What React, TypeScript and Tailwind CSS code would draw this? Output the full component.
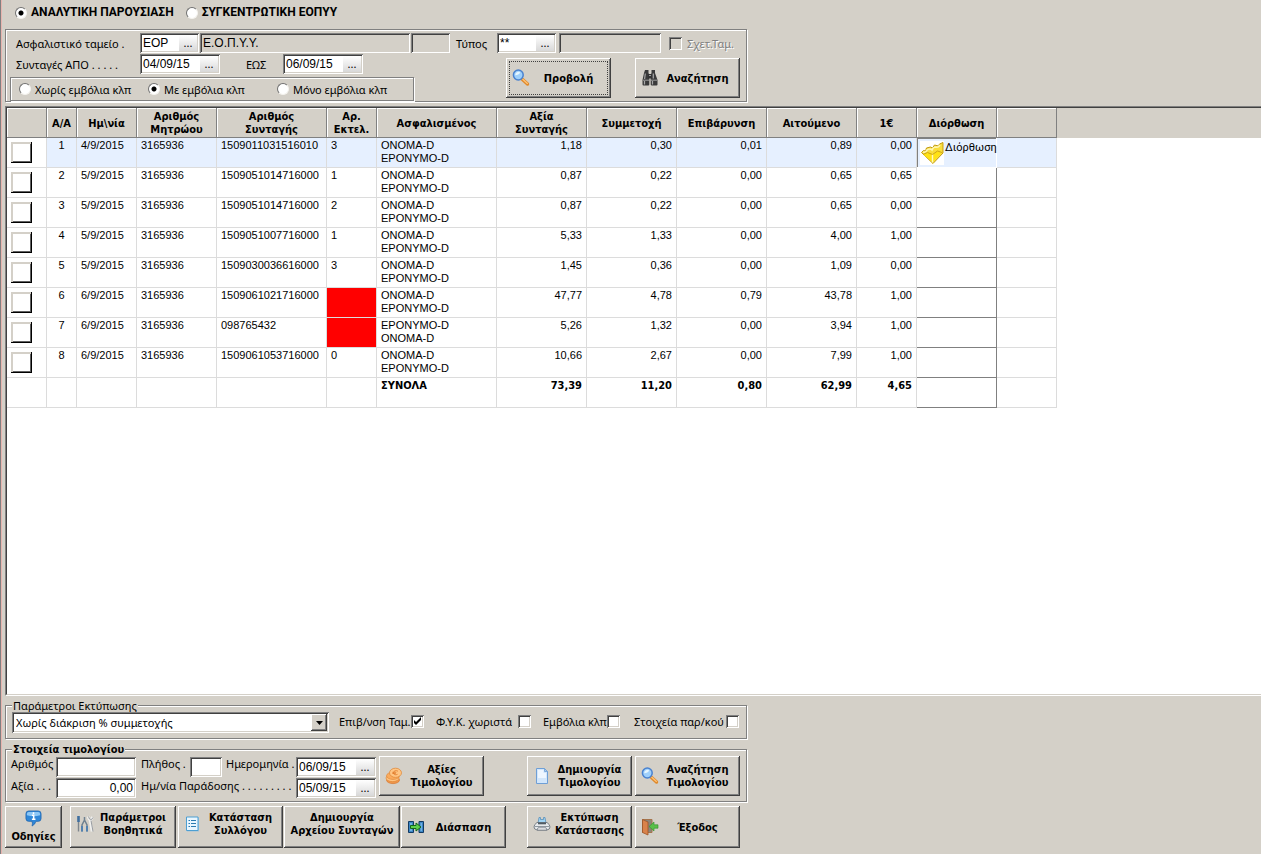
import { useState, ReactNode } from 'react';
import clsx from 'clsx';

// --- Τύποι ---

interface Prescription {
    date: string;
    registry: string;
    code: string;
    execution: string;
    missing?: boolean;
    insured: [string, string];
    amounts: string[];
}

// --- Δεδομένα ---

const ROWS: Prescription[] = [
    { date: '4/9/2015', registry: '3165936', code: '1509011031516010', execution: '3', insured: ['ONOMA-D', 'EPONYMO-D'], amounts: ['1,18', '0,30', '0,01', '0,89', '0,00'] },
    { date: '5/9/2015', registry: '3165936', code: '1509051014716000', execution: '1', insured: ['ONOMA-D', 'EPONYMO-D'], amounts: ['0,87', '0,22', '0,00', '0,65', '0,65'] },
    { date: '5/9/2015', registry: '3165936', code: '1509051014716000', execution: '2', insured: ['ONOMA-D', 'EPONYMO-D'], amounts: ['0,87', '0,22', '0,00', '0,65', '0,00'] },
    { date: '5/9/2015', registry: '3165936', code: '1509051007716000', execution: '1', insured: ['ONOMA-D', 'EPONYMO-D'], amounts: ['5,33', '1,33', '0,00', '4,00', '1,00'] },
    { date: '5/9/2015', registry: '3165936', code: '1509030036616000', execution: '3', insured: ['ONOMA-D', 'EPONYMO-D'], amounts: ['1,45', '0,36', '0,00', '1,09', '0,00'] },
    { date: '6/9/2015', registry: '3165936', code: '1509061021716000', execution: '', missing: true, insured: ['ONOMA-D', 'EPONYMO-D'], amounts: ['47,77', '4,78', '0,79', '43,78', '1,00'] },
    { date: '6/9/2015', registry: '3165936', code: '098765432', execution: '', missing: true, insured: ['EPONYMO-D', 'ONOMA-D'], amounts: ['5,26', '1,32', '0,00', '3,94', '1,00'] },
    { date: '6/9/2015', registry: '3165936', code: '1509061053716000', execution: '0', insured: ['ONOMA-D', 'EPONYMO-D'], amounts: ['10,66', '2,67', '0,00', '7,99', '1,00'] },
];

const TOTALS = ['73,39', '11,20', '0,80', '62,99', '4,65'];

const HEADERS = ['', 'A/A', 'Ημ\\νία', 'Αριθμός\nΜητρώου', 'Αριθμός\nΣυνταγής', 'Αρ.\nΕκτελ.', 'Ασφαλισμένος', 'Αξία\nΣυνταγής', 'Συμμετοχή', 'Επιβάρυνση', 'Αιτούμενο', '1€', 'Διόρθωση', ''];

// --- Κοινά στυλ ---

const BOLD = "font-['DejaVu_Sans_Condensed','DejaVu_Sans',sans-serif] font-bold";
const DATA = "font-['Liberation_Sans',Arial,sans-serif]";
const SUNKEN = 'shadow-[inset_1px_1px_#808080,inset_-1px_-1px_#fff,inset_2px_2px_#404040,inset_-2px_-2px_#d4d0c8]';
const RAISED = 'shadow-[inset_-1px_-1px_#404040,inset_1px_1px_#fff,inset_-2px_-2px_#808080]';
const ETCHED = 'border border-[#808080] shadow-[1px_1px_#fff,inset_1px_1px_#fff]';
const CELL = 'border-r border-b border-[#dcdcdc] px-1 pt-px align-top';

// --- Στοιχεία φόρμας ---

function Combo({ id, value, className }: { id: string; value: string; className: string }) {
    return (
        <span className={clsx('flex h-5 shrink-0 bg-white p-[2px]', SUNKEN, className)}>
            <input id={id} defaultValue={value} className={clsx('min-w-0 flex-1 px-px text-xs leading-4 outline-none', DATA)} />
            <button type="button" className="w-[18px] bg-linear-to-b from-white to-[#d8d8d8] text-[11px] leading-3">...</button>
        </span>
    );
}

function TextBox({ id, value = '', className, readOnly, label }: { id: string; value?: string; className: string; readOnly?: boolean; label?: string }) {
    return (
        <input
            id={id}
            aria-label={label}
            defaultValue={value}
            readOnly={readOnly}
            className={clsx('h-5 shrink-0 px-[3px] text-xs outline-none', DATA, SUNKEN, readOnly ? 'bg-[#d4d0c8]' : 'bg-white', className)}
        />
    );
}

function Radio({ name, label, checked, className }: { name: string; label: string; checked?: boolean; className?: string }) {
    return (
        <label className={clsx('flex items-center whitespace-nowrap', className)}>
            <input
                type="radio"
                name={name}
                defaultChecked={checked}
                className="mr-1 size-3 shrink-0 appearance-none rounded-full border border-[#f4f2ee] border-t-[#707070] border-l-[#707070] bg-white checked:bg-[radial-gradient(circle,#000_2px,#fff_3px)]"
            />
            {label}
        </label>
    );
}

function Check({ id, checked, disabled }: { id: string; checked?: boolean; disabled?: boolean }) {
    return (
        <span className="grid size-[13px] shrink-0">
            <input
                id={id}
                type="checkbox"
                defaultChecked={checked}
                disabled={disabled}
                className={clsx('peer col-start-1 row-start-1 size-[13px] appearance-none bg-white disabled:bg-[#d4d0c8]', SUNKEN)}
            />
            <svg viewBox="0 0 13 13" className="pointer-events-none invisible col-start-1 row-start-1 size-[13px] peer-checked:visible">
                <path d="M3 5v3l2 2 5-5V2L5 7z" fill="#000" />
            </svg>
        </span>
    );
}

function ToolButton({ icon, children, className, focused }: { icon?: ReactNode; children: ReactNode; className: string; focused?: boolean }) {
    return (
        <button
            type="button"
            className={clsx('flex shrink-0 items-center text-center leading-[13px] whitespace-pre', icon ? 'pr-1 pl-[6px]' : 'px-1', BOLD, RAISED, focused && 'outline-1 -outline-offset-4 outline-dotted outline-[#404040]', className)}
        >
            {icon}
            <span className="flex-1">{children}</span>
        </button>
    );
}

// --- Εικονίδια ---

const Magnifier = () => (
    <svg viewBox="0 0 18 18" className="size-[18px] shrink-0">
        <path d="M10 10l5.5 5" stroke="#e08a2c" strokeWidth="3.4" strokeLinecap="round" />
        <path d="M10.8 10.2l4.6 4.2" stroke="#ffc477" strokeWidth="1.3" strokeLinecap="round" />
        <circle cx="6.3" cy="6" r="4.9" fill="#9fd0fb" stroke="#4a82cf" strokeWidth="1.5" />
        <path d="M3.2 6.2a3.2 3.2 0 0 1 5-2.8c-1 1.8-2.5 2.6-5 2.8z" fill="#e6f6ff" />
    </svg>
);

const Binoculars = () => (
    <svg viewBox="0 0 18 18" className="size-[18px] shrink-0">
        <path d="M4 1h3.5v3l.8 2v9.5q0 1-1 1H2.500q-1 0-1-1V11L3 4z" fill="#3a3a3a" />
        <path d="M10.500 1H14v3l2.500 7v4.500q0 1-1 1h-4.500q-1.300 0-1.300-1V6l.8-2z" fill="#3a3a3a" />
        <path d="M7 5h4v4.500H7z" fill="#333" />
        <path d="M4.300 4.500L3.600 10M12.300 4.500v5M3.500 12v3.500M11.500 12v3.500" stroke="#a8a8a8" strokeWidth="1.200" />
        <path d="M2 11.200h6M10 11.200h6M8 6.500h2" stroke="#c8c8c8" strokeWidth=".7" />
    </svg>
);

const Coins = () => (
    <svg viewBox="0 0 18 18" className="size-[18px] shrink-0">
        <ellipse cx="8" cy="13" rx="6.5" ry="3.6" fill="#f0964a" stroke="#d9762a" strokeWidth=".7" />
        <ellipse cx="7.500" cy="11" rx="6.500" ry="3.600" fill="#ffc583" stroke="#e08a3c" strokeWidth=".7" />
        <ellipse cx="8" cy="8.800" rx="6.500" ry="3.600" fill="#fbab5c" stroke="#e08a3c" strokeWidth=".7" />
        <ellipse cx="10.500" cy="5.800" rx="6" ry="4.600" fill="#ffc583" stroke="#e08a3c" strokeWidth=".8" />
        <path d="M13 4.200c-2-1.200-4.500-.3-4.600 1.600-.1 1.900 2.300 2.600 4.200 1.500M7.300 5.300h4M7.300 6.500h3.500" fill="none" stroke="#e07a2a" strokeWidth=".8" />
    </svg>
);

const Page = () => (
    <svg viewBox="0 0 18 18" className="size-[18px] shrink-0">
        <path d="M3.500 1.500h8l3 3v12h-11z" fill="#d2e6fb" stroke="#6f9fd6" />
        <path d="M5 3h5.500v3H13v5H5z" fill="#eef6ff" />
        <path d="M11.500 1.500v3h3z" fill="#a8cbf0" stroke="#6f9fd6" strokeWidth=".8" />
    </svg>
);

const Info = () => (
    <svg viewBox="0 0 18 18" className="size-[17px]">
        <path d="M4 1h10q3 0 3 3v5q0 3-3 3h-2.500q-.5 3-4 5 .8-2.500 0-5H4q-3 0-3-3V4q0-3 3-3z" fill="#2f87d8" stroke="#1c62ad" strokeWidth=".8" />
        <path d="M4 2h10q2 0 2 2v1.500q-7 2-14 0V4q0-2 2-2z" fill="#8cc7f6" />
        <path d="M9 2.500v1.800M7.300 5.500H9.200v4M7.300 9.800h3.800" stroke="#fff" strokeWidth="1.600" fill="none" />
    </svg>
);

const Tools = () => (
    <svg viewBox="0 0 18 18" className="size-[18px] shrink-0">
        <path d="M2.500 1v6" stroke="#3f6f9f" strokeWidth="2.600" />
        <path d="M2.500 7v9.500" stroke="#7d858d" strokeWidth="1.400" />
        <path d="M8.500 2v4M8.500 5L6 10v6.500M8.500 5l2.500 5v6.500" stroke="#6f8190" strokeWidth="1.500" fill="none" />
        <path d="M6 11v5.500M11 11v5.500" stroke="#4d7fb2" strokeWidth="1.800" />
        <path d="M12 1.500l1 2.500 2 .5L16.500 2M14 5l2 11.500" stroke="#f0f0ee" strokeWidth="2.600" fill="none" />
        <path d="M12.500 1.500l1 2.500 2 .5L17 2.500M15 5.500l2 11" stroke="#8d9297" strokeWidth=".9" fill="none" />
    </svg>
);

const ListDoc = () => (
    <svg viewBox="0 0 18 18" className="size-[18px] shrink-0">
        <path d="M3 2.500h12v14H3z" fill="#9ec4de" />
        <path d="M2.500 2h11.500v13.500H2.500z" fill="#e9f6ff" stroke="#4d9fd2" />
        <path d="M4.500 5.500H6M4.500 8.500H6M4.500 11.500H6M7 5.500h5M7 8.500h5M7 11.500h5" stroke="#2b7bb0" />
    </svg>
);

const Split = () => (
    <svg viewBox="0 0 18 18" className="size-[18px] shrink-0">
        <path d="M1.500 3.500h5v11h-5zM12 3.500h4.500v11H12z" fill="#3c86c4" stroke="#123a63" />
        <path d="M3 5h2v8H3zM13.500 5H15v8h-1.500z" fill="#6fb0e2" />
        <path d="M3.500 7.500H9V5l5 4-5 4v-2.500H3.500z" fill="#5fd14c" stroke="#14671a" />
    </svg>
);

const PrinterIcon = () => (
    <svg viewBox="0 0 18 18" className="size-[18px] shrink-0">
        <path d="M6 2.500h1.500v2h3v-2H12l1 6H5z" fill="#9fd4f5" stroke="#5b8fb8" strokeWidth=".8" />
        <path d="M4 7.500h10q3 2 3 4.500t-3 3H4q-3-.5-3-3t3-4.500z" fill="#e6e9ec" stroke="#6c757d" strokeWidth=".9" />
        <path d="M5 7.500h8v1.800H5z" fill="#4f5a63" />
        <path d="M2 11.500h14" stroke="#8e979f" />
        <path d="M5 12.800h8l1 2.200H4z" fill="#fff" stroke="#6c757d" strokeWidth=".8" />
    </svg>
);

const Exit = () => (
    <svg viewBox="0 0 18 18" className="size-[18px] shrink-0">
        <path d="M1.500 1.500h9.500v13H1.500z" fill="#8c8478" stroke="#a5744c" />
        <path d="M1.500 1.500L7 4v13l-5.500-2.500z" fill="#d9824a" stroke="#9c5426" strokeWidth=".8" />
        <path d="M17 6.800h-4V4L8 8.500l5 4.500v-2.800h4z" fill="#58c04a" stroke="#2f8f2d" strokeWidth=".6" />
    </svg>
);

const Fix = () => (
    <svg viewBox="0 0 24 24" className="size-6 shrink-0 bg-white">
        <path d="M1.500 11.500l2-2 2 .5 1-3 4-1 2 1 2-3 4 1 1-2 3.500-1.500V12L13 22.500z" fill="#f9de3c" stroke="#c29a12" />
        <path d="M3 11q3 1 4-2 3-2 5 0 1-3 4-3 2 1 4-2" stroke="#fff6b0" strokeWidth="1.600" fill="none" />
        <path d="M3 13.500l9.500 7.500L21.500 12l-4-2-4.500 3.500-5-2z" fill="#ffe214" />
        <path d="M12.500 13v8.500" stroke="#fff8c0" strokeWidth="1.400" />
        <path d="M3 13.500l4.500-2 5 2 5-3.500 4.500 1.500" stroke="#cfa514" fill="none" />
    </svg>
);

// --- Πίνακας συνταγών ---

function PrescriptionTable() {
    return (
        <div className="flex min-h-0 flex-1 flex-col border-y border-l border-t-[#808080] border-b-white border-l-[#808080]">
            <div className="flex-1 overflow-hidden border-y border-l border-t-[#404040] border-b-[#d4d0c8] border-l-[#404040] bg-white">
                <table className={clsx('w-full table-fixed border-separate border-spacing-0 text-[11px] leading-[13px]', DATA)}>
                    <colgroup>
                        <col className="w-[40px]" />
                        <col className="w-[30px]" />
                        <col className="w-[60px]" />
                        <col className="w-[80px]" />
                        <col className="w-[110px]" />
                        <col className="w-[50px]" />
                        <col className="w-[120px]" />
                        <col className="w-[90px]" />
                        <col className="w-[90px]" />
                        <col className="w-[90px]" />
                        <col className="w-[90px]" />
                        <col className="w-[60px]" />
                        <col className="w-[80px]" />
                        <col className="w-[60px]" />
                        <col />
                    </colgroup>
                    <thead>
                        <tr className={clsx('h-[30px] bg-[#d4d0c8]', BOLD)}>
                            {HEADERS.map((h, i) => (
                                <th key={i} className="h-[30px] border-r border-b border-[#808080] pt-px text-center leading-[13px] whitespace-pre shadow-[inset_1px_1px_#fff]">{h}</th>
                            ))}
                            <th />
                        </tr>
                    </thead>
                    <tbody>
                        {ROWS.map((row, i) => (
                            <tr key={i} className={clsx('h-[30px]', i === 0 && 'bg-[#e6f0ff]')}>
                                <td className={clsx('bg-white', CELL)}>
                                    <input
                                        type="checkbox"
                                        aria-label={`Επιλογή ${i + 1}`}
                                        className="mt-[3px] block size-[21px] appearance-none bg-white shadow-[inset_-1px_-1px_#000,inset_2px_2px_#d4d0c8,inset_-2px_-2px_#606060] checked:bg-[#d4d0c8]"
                                    />
                                </td>
                                <td className={clsx('text-center', CELL)}>{i + 1}</td>
                                <td className={CELL}>{row.date}</td>
                                <td className={CELL}>{row.registry}</td>
                                <td className={CELL}>{row.code}</td>
                                <td className={clsx(row.missing && 'bg-[#f00]', CELL)}>{row.execution}</td>
                                <td className={CELL}>{row.insured[0]}<br />{row.insured[1]}</td>
                                {row.amounts.map((a, j) => (
                                    <td key={j} className={clsx('text-right', CELL)}>{a}</td>
                                ))}
                                {i === 0 ? (
                                    <td className="border-r border-b border-white shadow-[inset_1px_1px_#808080]">
                                        <button type="button" className="flex h-7 items-start pt-[2px] pl-[3px] font-[Roboto,sans-serif]">
                                            <Fix />
                                            <span className="ml-px">Διόρθωση</span>
                                        </button>
                                    </td>
                                ) : (
                                    <td className="border-r border-b border-[#808080]" />
                                )}
                                <td className={CELL} />
                                <td className="bg-white" />
                            </tr>
                        ))}
                        <tr className={clsx('h-[30px]', BOLD)}>
                            {[0, 1, 2, 3, 4, 5].map(i => <td key={i} className={CELL} />)}
                            <td className={CELL}>ΣΥΝΟΛΑ</td>
                            {TOTALS.map(t => <td key={t} className={clsx('text-right', CELL)}>{t}</td>)}
                            <td className="border-r border-b border-[#808080]" />
                            <td className={CELL} />
                            <td />
                        </tr>
                    </tbody>
                </table>
            </div>
        </div>
    );
}

export default function App() {
    const [pricing, setPricing] = useState('all');

    return (
        <div className="h-screen border-l border-[#808080] bg-[#d4d0c8] font-['Noto_Sans',sans-serif] text-[11px] leading-[13px] text-black">
            <div className="flex h-full flex-col border-l border-[#e8b4ae] pb-[6px] pl-[3px]">

                {/* Τρόπος παρουσίασης */}
                <div className="flex h-[29px] items-start gap-3 pt-[6px] pl-[10px] font-[Roboto,sans-serif] text-xs leading-[13px] font-bold">
                    <Radio name="view" label="ΑΝΑΛΥΤΙΚΗ ΠΑΡΟΥΣΙΑΣΗ" checked />
                    <Radio name="view" label="ΣΥΓΚΕΝΤΡΩΤΙΚΗ ΕΟΠΥΥ" />
                </div>

                {/* Φίλτρα */}
                <div className={clsx('mb-1 w-[742px] pt-[3px]', ETCHED)}>
                    <div className="flex h-5 items-center pl-[10px]">
                        <label htmlFor="fund" className="w-[124px]">Ασφαλιστικό ταμείο .</label>
                        <Combo id="fund" value="EOP" className="w-[59px]" />
                        <TextBox id="fundName" label="Ταμείο" value="Ε.Ο.Π.Υ.Υ." readOnly className="ml-px w-[210px]" />
                        <TextBox id="fundExtra" label="Κωδικός" readOnly className="ml-px w-[39px]" />
                        <label htmlFor="kind" className="ml-[6px] w-[41px]">Τύπος</label>
                        <Combo id="kind" value="**" className="w-[59px]" />
                        <TextBox id="kindName" label="Περιγραφή" readOnly className="ml-[3px] w-[102px]" />
                        <span className="ml-2 flex items-center gap-[5px]">
                            <Check id="related" disabled />
                            <label htmlFor="related" className="text-[#808080] [text-shadow:1px_1px_#fff]">Σχετ.Ταμ.</label>
                        </span>
                    </div>
                    <div className="mt-px flex">
                        <div className="w-[408px] pl-1">
                            <div className="flex h-5 items-center pl-[6px]">
                                <label htmlFor="from" className="w-[124px]">Συνταγές ΑΠΟ . . . . .</label>
                                <Combo id="from" value="04/09/15" className="w-[80px]" />
                                <label htmlFor="to" className="ml-[26px] w-[37px]">ΕΩΣ</label>
                                <Combo id="to" value="06/09/15" className="w-[80px]" />
                            </div>
                            <div className={clsx('mt-[3px] flex h-6 items-center pl-2', ETCHED)}>
                                <Radio name="vaccines" label="Χωρίς εμβόλια κλπ" className="w-[129px]" />
                                <Radio name="vaccines" label="Με εμβόλια κλπ" checked className="w-[129px]" />
                                <Radio name="vaccines" label="Μόνο εμβόλια κλπ" />
                            </div>
                        </div>
                        <div className="ml-[92px] flex gap-6 pt-1">
                            <ToolButton icon={<Magnifier />} focused className="h-10 w-[105px]">Προβολή</ToolButton>
                            <ToolButton icon={<Binoculars />} className="h-10 w-[105px]">Αναζήτηση</ToolButton>
                        </div>
                    </div>
                </div>

                <PrescriptionTable />

                {/* Παράμετροι εκτύπωσης */}
                <fieldset className={clsx('mt-[3px] h-[40px] w-[742px]', ETCHED)}>
                    <legend className="ml-[6px] bg-[#d4d0c8] px-px">Παράμετροι Εκτύπωσης</legend>
                    <div className="flex items-start pl-[6px]">
                        <span className={clsx('relative h-[21px] w-[317px] bg-white p-[2px]', SUNKEN)}>
                            <select
                                aria-label="Παράμετροι Εκτύπωσης"
                                value={pricing}
                                onChange={e => setPricing(e.target.value)}
                                className="block h-[17px] w-full appearance-none px-[2px] outline-none"
                            >
                                <option value="all">Χωρίς διάκριση % συμμετοχής</option>
                            </select>
                            <span className={clsx('pointer-events-none absolute top-[2px] right-[2px] flex h-[17px] w-4 items-center justify-center bg-[#d4d0c8]', RAISED)}>
                                <svg viewBox="0 0 7 4" className="h-1 w-[7px]"><path d="M0 0h7L3.5 4z" /></svg>
                            </span>
                        </span>
                        <div className="flex items-center pt-[3px]">
                            <label htmlFor="charge" className="ml-[10px] w-[72px] whitespace-nowrap">Επιβ/νση Ταμ.</label>
                            <Check id="charge" checked />
                            <label htmlFor="fyk" className="ml-3 w-[82px] whitespace-nowrap">Φ.Υ.Κ. χωριστά</label>
                            <Check id="fyk" />
                            <label htmlFor="vacc" className="ml-3 w-[64px] whitespace-nowrap">Εμβόλια κλπ</label>
                            <Check id="vacc" />
                            <label htmlFor="details" className="ml-[14px] w-[92px] whitespace-nowrap">Στοιχεία παρ/κού</label>
                            <Check id="details" />
                        </div>
                    </div>
                </fieldset>

                {/* Στοιχεία τιμολογίου */}
                <fieldset className={clsx('mt-1 h-[59px] w-[742px]', ETCHED)}>
                    <legend className={clsx('ml-[6px] bg-[#d4d0c8] px-px', BOLD)}>Στοιχεία τιμολογίου</legend>
                    <div className="flex pl-[5px]">
                        <div className="mr-[3px] flex flex-col gap-px pt-px">
                            <div className="flex items-start">
                                <label htmlFor="number" className="w-[45px]">Αριθμός</label>
                                <TextBox id="number" className="w-[80px]" />
                                <label htmlFor="count" className="ml-[5px] w-[49px]">Πλήθος .</label>
                                <TextBox id="count" className="w-[32px]" />
                                <label htmlFor="date" className="ml-1 w-[70px] whitespace-nowrap">Ημερομηνία .</label>
                                <Combo id="date" value="06/09/15" className="w-[80px]" />
                            </div>
                            <div className="flex items-start">
                                <label htmlFor="value" className="w-[45px] pt-px">Αξία . . .</label>
                                <TextBox id="value" value="0,00" className="w-[80px] text-right" />
                                <label htmlFor="delivery" className="ml-[5px] w-[155px] pt-px whitespace-nowrap">Ημ/νία Παράδοσης . . . . . . . . .</label>
                                <Combo id="delivery" value="05/09/15" className="w-[80px]" />
                            </div>
                        </div>
                        <ToolButton icon={<Coins />} className="h-10 w-[105px]">{'Αξίες\nΤιμολογίου'}</ToolButton>
                        <ToolButton icon={<Page />} className="ml-[43px] h-10 w-[105px]">{'Δημιουργία\nΤιμολογίου'}</ToolButton>
                        <ToolButton icon={<Magnifier />} className="ml-[3px] h-10 w-[105px]">{'Αναζήτηση\nΤιμολογίου'}</ToolButton>
                    </div>
                </fieldset>

                {/* Ενέργειες */}
                <div className="mt-1 flex h-[42px] shrink-0">
                    <button type="button" className={clsx('flex w-[57px] flex-col items-center gap-[3px] pt-[4px]', BOLD, RAISED)}>
                        <Info />
                        Οδηγίες
                    </button>
                    <ToolButton icon={<Tools />} className="ml-2 w-[106px] pb-[6px]">{'Παράμετροι\nΒοηθητικά'}</ToolButton>
                    <ToolButton icon={<ListDoc />} className="ml-[2px] w-[105px] pb-[6px]">{'Κατάσταση\nΣυλλόγου'}</ToolButton>
                    <ToolButton className="ml-px w-[116px] pb-[6px]">{'Δημιουργία\nΑρχείου Συνταγών'}</ToolButton>
                    <ToolButton icon={<Split />} className="ml-px w-[105px]">Διάσπαση</ToolButton>
                    <ToolButton icon={<PrinterIcon />} className="ml-[21px] w-[105px] pb-[6px]">{'Εκτύπωση\nΚατάστασης'}</ToolButton>
                    <ToolButton icon={<Exit />} className="ml-[3px] w-[105px]">Έξοδος</ToolButton>
                </div>

            </div>
        </div>
    );
}
